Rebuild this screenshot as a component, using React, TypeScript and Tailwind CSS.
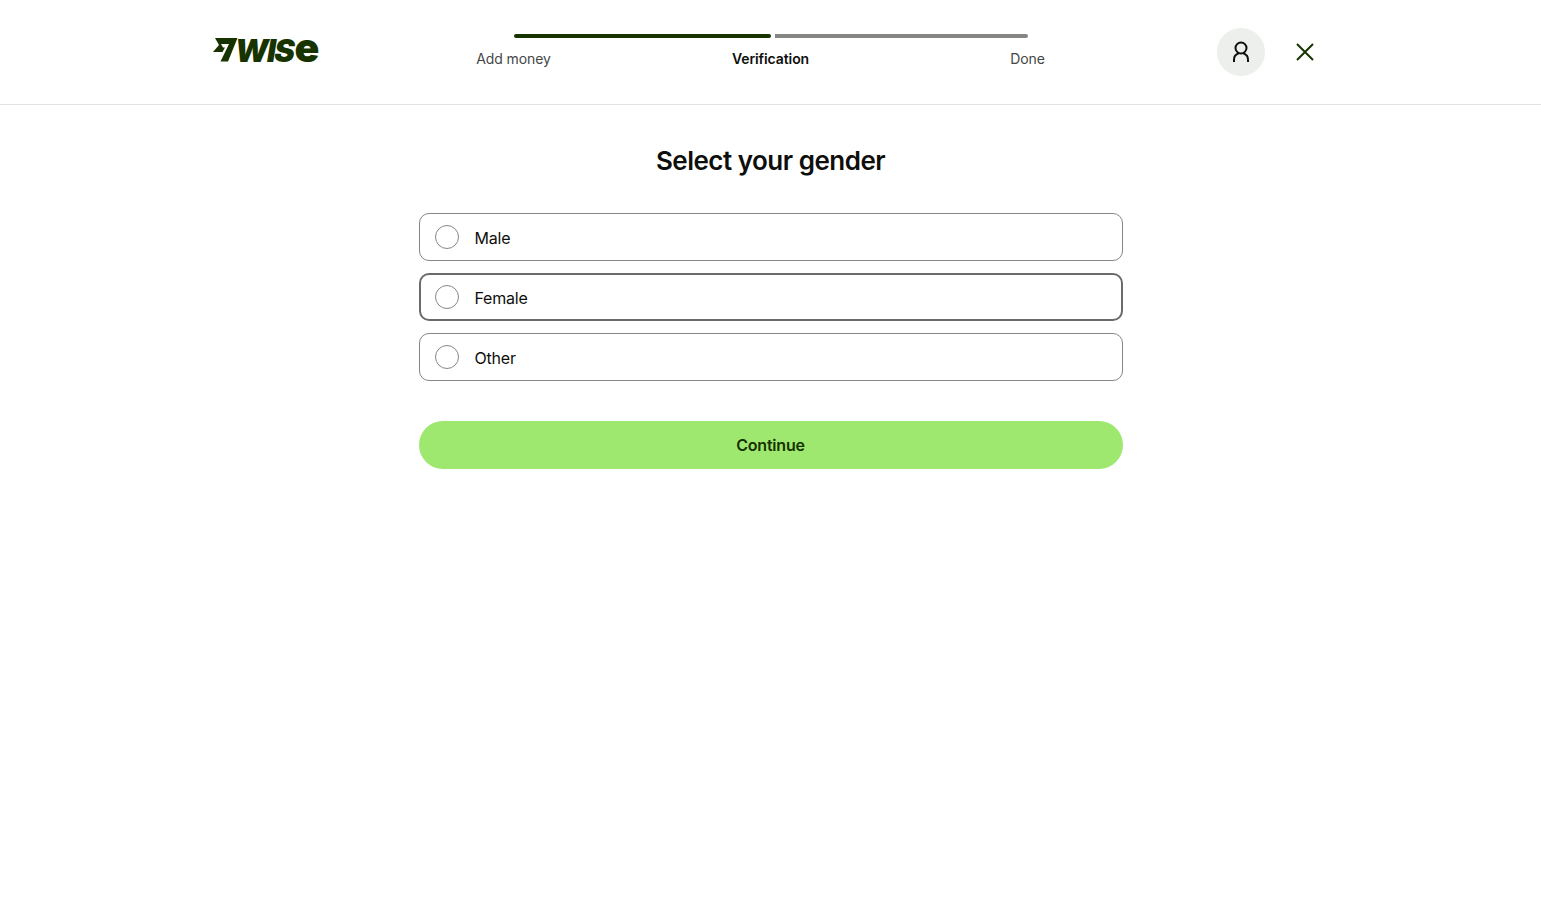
import { useState } from 'react'

const options = ['Male', 'Female', 'Other']

function Logo() {
  return (
    <div className="flex items-start text-[#163300]">
      <svg width="25" height="26" viewBox="0 0 25 26" className="shrink-0 mt-[3px] -ml-[1px]">
        <path d="M2 1H24.5L15 24.5H7.5L16 7H8L10 10.5H12L9.5 15H0L6 8Z" fill="currentColor" />
      </svg>
      <div className="flex items-baseline h-[30px] leading-[30px] -ml-[3px] -mt-[2px]">
        <span className="text-[31px] font-black italic tracking-[-1.6px]">WIS</span>
        <span className="text-[41px] font-black tracking-[-1px] ml-[1px]">e</span>
      </div>
    </div>
  )
}

export default function App() {
  const [selected, setSelected] = useState<string | null>(null)

  return (
    <div className="min-h-screen bg-white font-['Inter',sans-serif] text-[#0e0f0c]">
      <header className="h-[105px] border-b border-[#e2e3e0] px-[214px] grid grid-cols-[1fr_514px_1fr]">
        <div className="pt-[34px]">
          <Logo />
        </div>

        <div className="pt-[34px]">
          <div className="flex gap-[4px]">
            <div className="h-1 w-[257px] rounded-full bg-[#163300]" />
            <div className="h-1 w-[253px] rounded-r-full bg-[#868685]" />
          </div>
          <div className="flex justify-between -mx-[75px] mt-[12px] text-sm leading-[18px] text-center tracking-[-0.1px]">
            <span className="w-[150px] text-[#454745]">Add money</span>
            <span className="w-[150px] font-semibold">Verification</span>
            <span className="w-[150px] text-[#454745]">Done</span>
          </div>
        </div>

        <div className="flex justify-end items-start pt-[28px] gap-[18px]">
          <button className="w-12 h-12 rounded-full bg-[#edefec] flex items-center justify-center">
            <svg width="24" height="24" viewBox="0 0 24 24" fill="none" stroke="#0e0f0c" strokeWidth="2">
              <circle cx="12" cy="8" r="5.5" />
              <path d="M5 22v-2a6.5 6.5 0 0 1 4.5-6.5M19 22v-2a6.5 6.5 0 0 0-4.5-6.5" />
            </svg>
          </button>
          <button className="w-11 h-12 flex items-center justify-center">
            <svg width="24" height="24" viewBox="0 0 24 24" fill="none" stroke="#163300" strokeWidth="2">
              <path d="M4 4l16 16M20 4L4 20" />
            </svg>
          </button>
        </div>
      </header>

      <main className="w-[704px] mx-auto pt-[38px]">
        <h1 className="text-[26px] leading-[36px] font-semibold text-center tracking-[-0.5px]">Select your gender</h1>

        <div className="mt-[34px] flex flex-col gap-3">
          {options.map(o => (
            <label
              key={o}
              onClick={() => setSelected(o)}
              className={`h-12 rounded-[10px] flex items-center bg-white ${
                o === 'Female' ? 'border-2 border-[#6a6c6a] pl-[14px]' : 'border border-[#868685] pl-[15px]'
              }`}
            >
              <span className={`w-6 h-6 rounded-full border border-[#868685] ${selected === o ? 'bg-[#163300]' : ''}`} />
              <span className="ml-4 text-base leading-6 pt-[2px] tracking-[-0.2px]">{o}</span>
            </label>
          ))}
        </div>

        <button className="mt-10 w-full h-12 rounded-full bg-[#9fe870] text-[#163300] font-semibold text-base tracking-[-0.2px]">
          Continue
        </button>
      </main>
    </div>
  )
}
